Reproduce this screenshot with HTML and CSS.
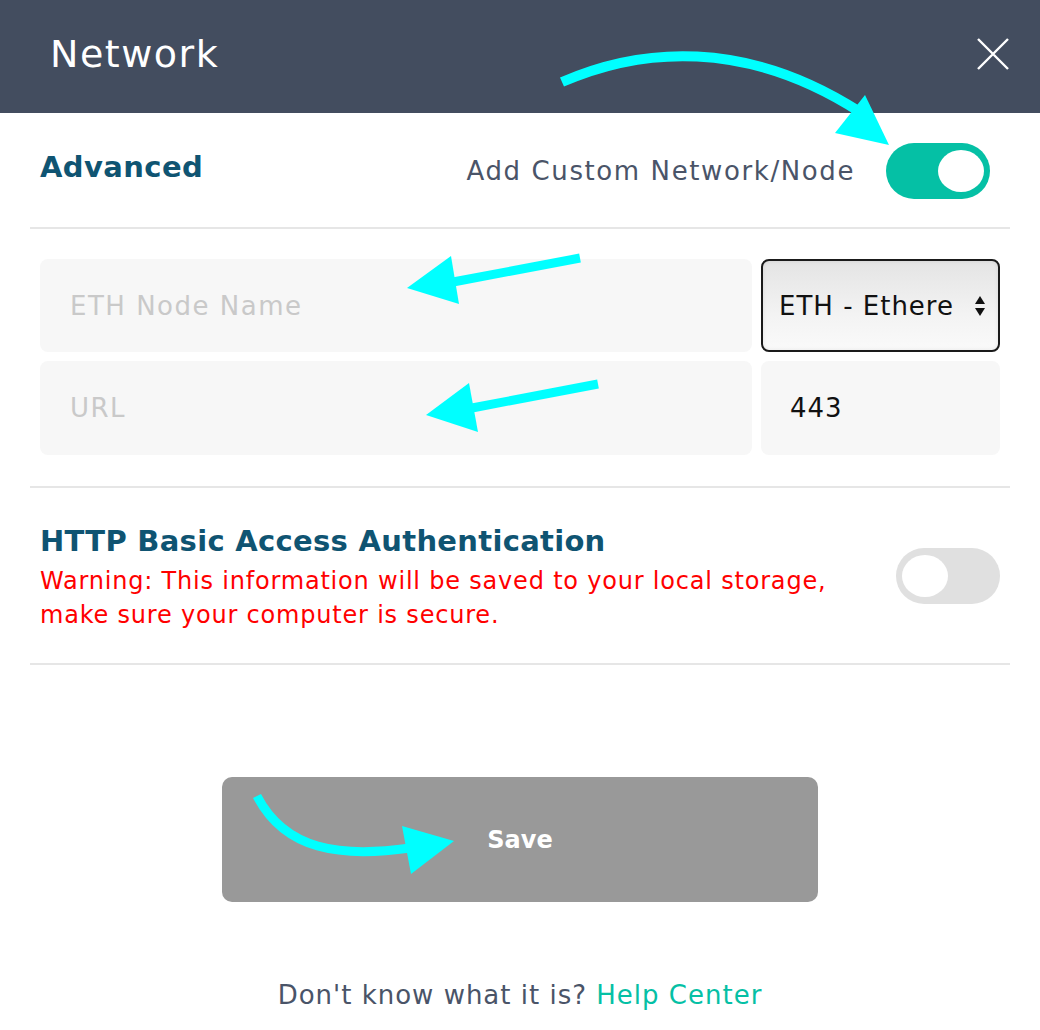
FILE: index.html
```html
<!DOCTYPE html>
<html lang="en">
<head>
<meta charset="utf-8">
<title>Network</title>
<link rel="stylesheet" href="styles.css">
</head>
<body>
<div class="modal">
  <header class="modal-header">
    <h1 class="modal-title">Network</h1>
    <button class="close-btn" aria-label="Close">
      <svg width="34" height="34" viewBox="0 0 34 34"><path d="M2 2 L32 32 M32 2 L2 32" stroke="#fff" stroke-width="2.4" fill="none"/></svg>
    </button>
  </header>

  <div class="modal-body">
    <section class="row-advanced">
      <h2 class="section-title">Advanced</h2>
      <div class="custom-toggle-group">
        <span class="toggle-label">Add Custom Network/Node</span>
        <span class="switch switch-on"><span class="knob"></span></span>
      </div>
    </section>

    <section class="fields">
      <div class="field field-input placeholder">ETH Node Name</div>
      <div class="field field-select">
        <span class="select-text">ETH - Ethere</span>
        <span class="select-arrows">
          <svg width="12" height="22" viewBox="0 0 12 22"><path d="M6 1 L11 9 L1 9 Z M6 21 L11 13 L1 13 Z" fill="#111"/></svg>
        </span>
      </div>
      <div class="field field-input placeholder">URL</div>
      <div class="field field-input port">443</div>
    </section>

    <section class="row-auth">
      <div class="auth-text">
        <h2 class="auth-title">HTTP Basic Access Authentication</h2>
        <p class="auth-warning">Warning: This information will be saved to your local storage,<br>make sure your computer is secure.</p>
      </div>
      <span class="switch switch-off"><span class="knob"></span></span>
    </section>

    <div class="actions">
      <button class="save-btn">Save</button>
    </div>

    <p class="help">Don't know what it is? <a class="help-link" href="#">Help Center</a></p>
  </div>

  <svg class="annotations" width="1040" height="1030" viewBox="0 0 1040 1030">
    <g fill="#00FFFF" stroke="none">
      <path d="M562 82 C 640 48, 745 38, 860 112" stroke="#00FFFF" stroke-width="10" fill="none"/>
      <path d="M865 95 L835 133 L889 145 Z"/>
      <path d="M580 258 L453 282" stroke="#00FFFF" stroke-width="9" fill="none"/>
      <path d="M451 256 L407 288 L459 304 Z"/>
      <path d="M598 384 L472 408" stroke="#00FFFF" stroke-width="9" fill="none"/>
      <path d="M469 383 L426 415 L478 432 Z"/>
      <path d="M257 796 C 285 850, 340 858, 410 848" stroke="#00FFFF" stroke-width="9" fill="none"/>
      <path d="M402 826 L454 841 L411 874 Z"/>
    </g>
  </svg>
</div>
</body>
</html>
```
FILE: styles.css
```css
* { box-sizing: border-box; }
html, body { margin: 0; padding: 0; background: #fff; }
body { font-family: "DejaVu Sans", "Noto Sans", sans-serif; width: 1040px; }

.modal { position: relative; width: 1040px; height: 1030px; overflow: hidden; }

.modal-header {
  height: 113px;
  background: #434d5f;
  display: flex;
  align-items: center;
  justify-content: space-between;
  padding: 0 30px 6px 50px;
}
.modal-title {
  margin: 0;
  color: #fff;
  font-weight: 400;
  font-size: 38px;
  letter-spacing: 1.5px;
}
.close-btn {
  background: none; border: 0; padding: 0; margin: 0;
  width: 34px; height: 34px; display: flex;
}

.modal-body { padding: 0 30px; }

.row-advanced {
  display: flex;
  align-items: center;
  justify-content: space-between;
  padding: 30px 20px 29px 10px;
  border-bottom: 2px solid #e6e6e6;
  height: 116px;
}
.section-title {
  margin: 0 0 8px;
  color: #0f5472;
  font-size: 29px;
  font-weight: 700;
  letter-spacing: 0.4px;
}
.custom-toggle-group { display: flex; align-items: center; gap: 31px; }
.toggle-label { color: #4a5468; font-size: 26px; letter-spacing: 1.6px; }

.switch {
  position: relative;
  display: inline-block;
  width: 104px;
  height: 56px;
  border-radius: 28px;
  flex: none;
}
.switch .knob {
  position: absolute;
  top: 7px;
  width: 46px;
  height: 42px;
  border-radius: 50%;
  background: #fff;
}
.switch-on { background: #05c0a5; }
.switch-on .knob { right: 6px; }
.switch-off { background: #e0e0e0; }
.switch-off .knob { left: 6px; }

.fields {
  display: grid;
  grid-template-columns: 712px 239px;
  grid-template-rows: 93px 94px;
  gap: 9px;
  padding: 30px 10px 31px;
  border-bottom: 2px solid #e6e6e6;
}
.field {
  border-radius: 8px;
  background: #f7f7f7;
  display: flex;
  align-items: center;
  font-size: 26px;
  letter-spacing: 1.5px;
}
.field-input { padding: 0 30px; }
.placeholder { color: #c9c9c9; }
.port { color: #111; padding-left: 29px; letter-spacing: 1px; }
.field-select {
  border: 2px solid #1a1a1a;
  background: linear-gradient(#e4e4e4, #f3f3f3 60%, #fafafa);
  box-shadow: inset 0 0 4px rgba(0,0,0,0.08);
  justify-content: space-between;
  padding: 0 12px 0 16px;
  color: #111;
  letter-spacing: 1px;
}
.select-arrows { display: flex; }

.row-auth {
  display: flex;
  align-items: center;
  justify-content: space-between;
  padding: 0 10px;
  height: 177px;
  border-bottom: 2px solid #e6e6e6;
}
.auth-text { margin-top: 4px; }
.auth-title {
  margin: 0 0 6px;
  color: #0f5472;
  font-size: 29px;
  font-weight: 700;
  letter-spacing: 0.3px;
}
.auth-warning {
  margin: 0;
  color: #ff0000;
  font-size: 24px;
  line-height: 34px;
  letter-spacing: 0.8px;
}

.actions { display: flex; justify-content: center; padding-top: 112px; }
.save-btn {
  width: 596px;
  height: 125px;
  border: 0;
  border-radius: 10px;
  background: #999999;
  color: #fff;
  font-family: inherit;
  font-size: 24px;
  font-weight: 700;
}

.help {
  margin: 78px 0 0;
  text-align: center;
  color: #4a5468;
  font-size: 26px;
  letter-spacing: 1px;
}
.help-link { color: #05c0a5; text-decoration: none; }

.annotations { position: absolute; left: 0; top: 0; pointer-events: none; }
```
